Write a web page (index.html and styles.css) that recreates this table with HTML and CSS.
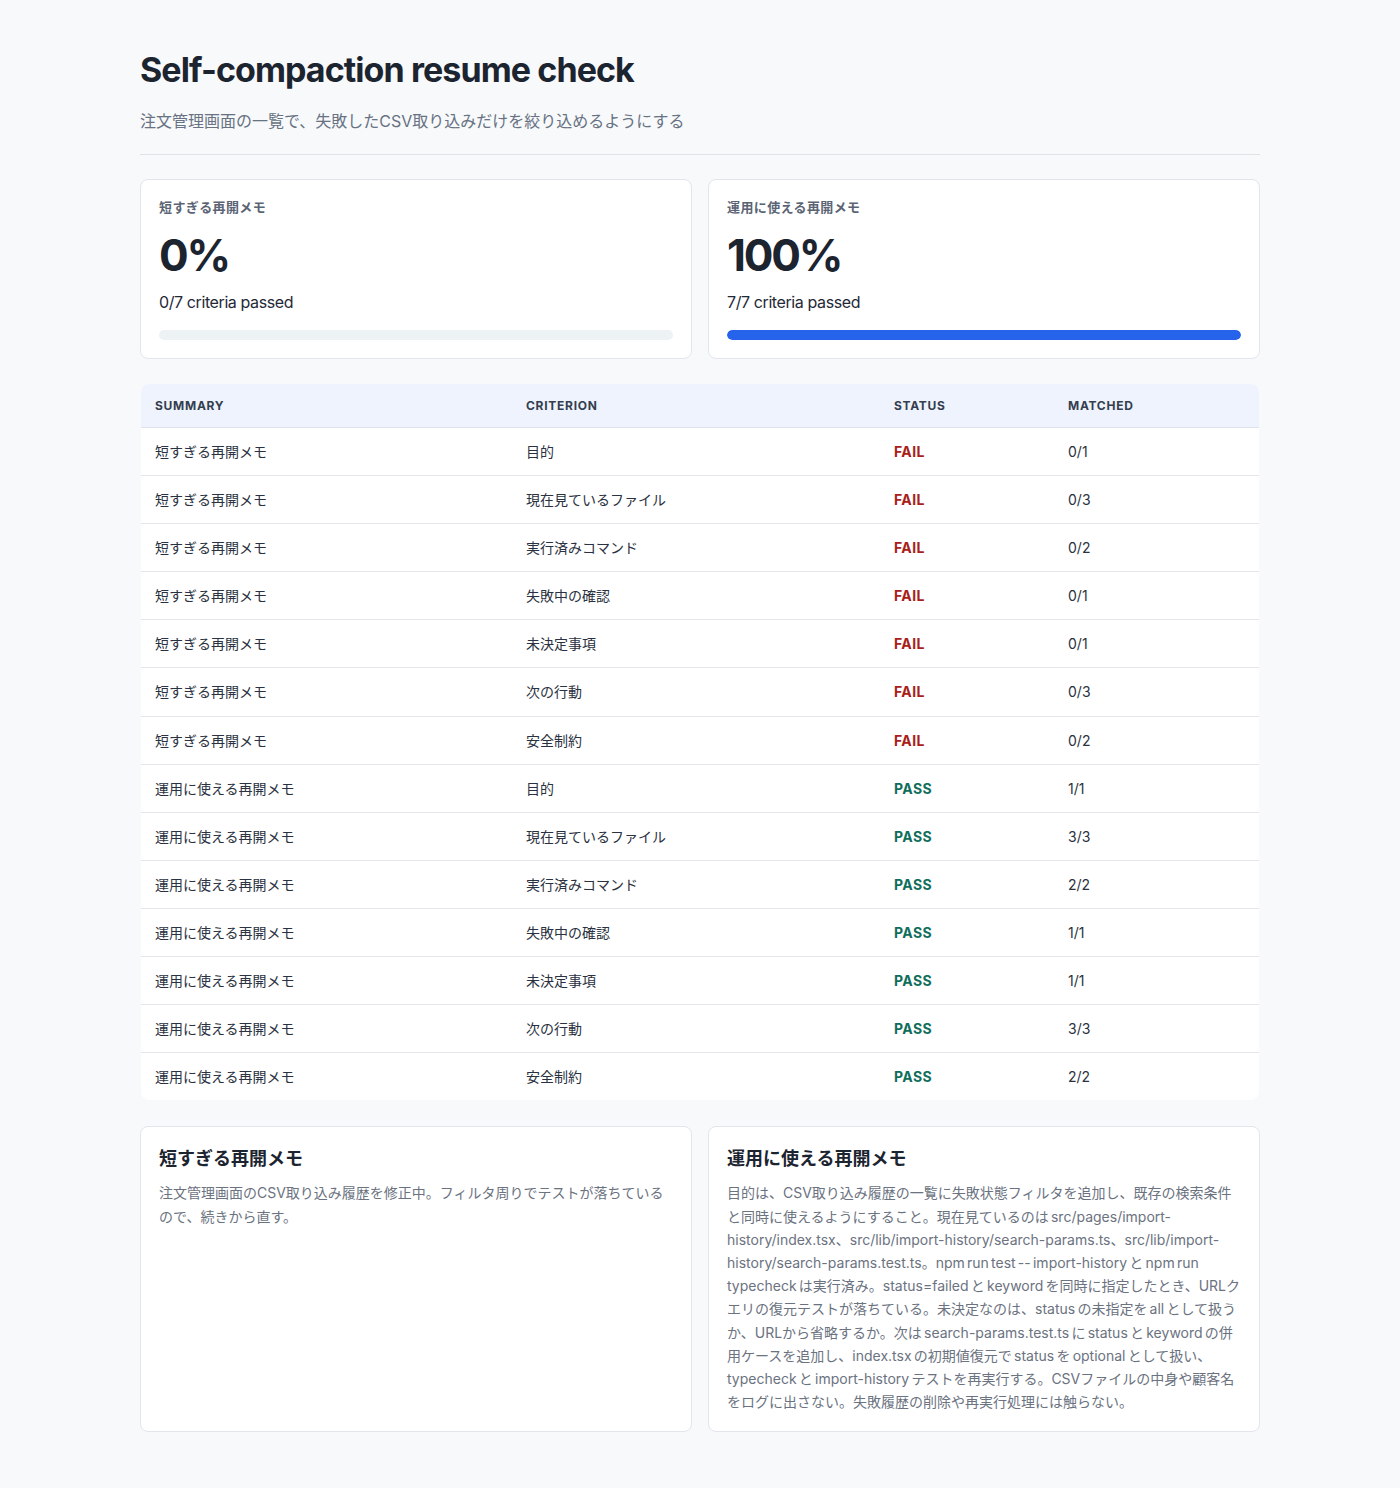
FILE: index.html
```html
<!DOCTYPE html>
<html lang="ja">
<head>
<meta charset="utf-8">
<title>Self-compaction resume check</title>
<link rel="stylesheet" href="styles.css">
</head>
<body>
<main class="page">
  <header class="head">
    <h1 class="title">Self-compaction resume check</h1>
    <p class="subtitle">注文管理画面の一覧で、失敗したCSV取り込みだけを絞り込めるようにする</p>
  </header>

  <section class="scores">
    <div class="card score">
      <div class="score-label">短すぎる再開メモ</div>
      <div class="score-value">0%</div>
      <div class="score-text">0/7 criteria passed</div>
      <div class="bar"><div class="bar-fill" style="width:0%"></div></div>
    </div>
    <div class="card score">
      <div class="score-label">運用に使える再開メモ</div>
      <div class="score-value">100%</div>
      <div class="score-text">7/7 criteria passed</div>
      <div class="bar"><div class="bar-fill" style="width:100%"></div></div>
    </div>
  </section>

  <div class="table-wrap">
  <table class="results">
    <colgroup>
      <col class="c1"><col class="c2"><col class="c3"><col class="c4">
    </colgroup>
    <thead>
      <tr><th>Summary</th><th>Criterion</th><th>Status</th><th>Matched</th></tr>
    </thead>
    <tbody>
      <tr><td>短すぎる再開メモ</td><td>目的</td><td class="fail">FAIL</td><td>0/1</td></tr>
      <tr><td>短すぎる再開メモ</td><td>現在見ているファイル</td><td class="fail">FAIL</td><td>0/3</td></tr>
      <tr><td>短すぎる再開メモ</td><td>実行済みコマンド</td><td class="fail">FAIL</td><td>0/2</td></tr>
      <tr><td>短すぎる再開メモ</td><td>失敗中の確認</td><td class="fail">FAIL</td><td>0/1</td></tr>
      <tr><td>短すぎる再開メモ</td><td>未決定事項</td><td class="fail">FAIL</td><td>0/1</td></tr>
      <tr><td>短すぎる再開メモ</td><td>次の行動</td><td class="fail">FAIL</td><td>0/3</td></tr>
      <tr><td>短すぎる再開メモ</td><td>安全制約</td><td class="fail">FAIL</td><td>0/2</td></tr>
      <tr><td>運用に使える再開メモ</td><td>目的</td><td class="pass">PASS</td><td>1/1</td></tr>
      <tr><td>運用に使える再開メモ</td><td>現在見ているファイル</td><td class="pass">PASS</td><td>3/3</td></tr>
      <tr><td>運用に使える再開メモ</td><td>実行済みコマンド</td><td class="pass">PASS</td><td>2/2</td></tr>
      <tr><td>運用に使える再開メモ</td><td>失敗中の確認</td><td class="pass">PASS</td><td>1/1</td></tr>
      <tr><td>運用に使える再開メモ</td><td>未決定事項</td><td class="pass">PASS</td><td>1/1</td></tr>
      <tr><td>運用に使える再開メモ</td><td>次の行動</td><td class="pass">PASS</td><td>3/3</td></tr>
      <tr><td>運用に使える再開メモ</td><td>安全制約</td><td class="pass">PASS</td><td>2/2</td></tr>
    </tbody>
  </table>
  </div>

  <section class="memos">
    <article class="card memo">
      <h2 class="memo-title">短すぎる再開メモ</h2>
      <p class="memo-body">注文管理画面のCSV取り込み履歴を修正中。フィルタ周りでテストが落ちているので、続きから直す。</p>
    </article>
    <article class="card memo">
      <h2 class="memo-title">運用に使える再開メモ</h2>
      <p class="memo-body">目的は、CSV取り込み履歴の一覧に失敗状態フィルタを追加し、既存の検索条件と同時に使えるようにすること。現在見ているのは src/pages/import-history/index.tsx、src/lib/import-history/search-params.ts、src/lib/import-history/search-params.test.ts。npm run test -- import-history と npm run typecheck は実行済み。status=failed と keyword を同時に指定したとき、URLクエリの復元テストが落ちている。未決定なのは、status の未指定を all として扱うか、URLから省略するか。次は search-params.test.ts に status と keyword の併用ケースを追加し、index.tsx の初期値復元で status を optional として扱い、typecheck と import-history テストを再実行する。CSVファイルの中身や顧客名をログに出さない。失敗履歴の削除や再実行処理には触らない。</p>
    </article>
  </section>
</main>
</body>
</html>
```

FILE: styles.css
```css
* { box-sizing: border-box; }

html, body {
  margin: 0;
  padding: 0;
  background: #f7f9fb;
}

body {
  font-family: "Inter", "Noto Sans CJK JP", sans-serif;
  color: #1f2937;
}

.page {
  width: 1120px;
  margin: 0 auto;
  padding: 48px 0 56px;
}

.head {
  border-bottom: 1px solid #dfe3e8;
  padding-bottom: 22px;
}

.title {
  margin: 0;
  font-size: 34px;
  line-height: 44px;
  font-weight: 700;
  letter-spacing: -0.027em;
  color: #1c2430;
}

.subtitle {
  margin: 18px 0 0;
  font-size: 16px;
  line-height: 22px;
  color: #687282;
}

.scores {
  margin-top: 24px;
  display: grid;
  grid-template-columns: 1fr 1fr;
  gap: 16px;
}

.card {
  background: #ffffff;
  border: 1px solid #e2e6ec;
  border-radius: 8px;
}

.score {
  padding: 18px 18px 18px;
}

.score-label {
  font-size: 13px;
  line-height: 18px;
  font-weight: 700;
  letter-spacing: 0.03em;
  color: #5b6474;
}

.score-value {
  margin-top: 17px;
  font-size: 44px;
  line-height: 44px;
  font-weight: 700;
  letter-spacing: -0.05em;
  color: #1c2430;
}

.score-text {
  margin-top: 13px;
  font-size: 16px;
  line-height: 24px;
  letter-spacing: -0.025em;
  color: #1f2937;
}

.bar {
  margin-top: 16px;
  height: 10px;
  border-radius: 5px;
  background: #edf2f5;
  overflow: hidden;
}

.bar-fill {
  height: 100%;
  border-radius: 5px;
  background: #2563eb;
}

.table-wrap {
  margin-top: 25px;
  padding: 0 1px;
}

.results {
  width: 100%;
  border-collapse: collapse;
  table-layout: fixed;
  background: #ffffff;
  border-radius: 8px;
  overflow: hidden;
}

.c1 { width: 371px; }
.c2 { width: 368px; }
.c3 { width: 174px; }
.c4 { width: 205px; }

.results th {
  text-align: left;
  background: #eef3fd;
  font-size: 12px;
  line-height: 15px;
  font-weight: 700;
  letter-spacing: 0.06em;
  text-transform: uppercase;
  color: #343e4e;
  padding: 14px 14px 14px;
  border-bottom: 1px solid #dde3ea;
}

.results td {
  font-size: 14px;
  line-height: 20px;
  color: #2a3140;
  padding: 14px 14px 13.1px;
  border-bottom: 1px solid #e3e7ec;
}

.results tbody tr:last-child td {
  border-bottom: none;
}

.results td.fail {
  color: #a8201a;
  font-weight: 700;
  letter-spacing: 0.03em;
}

.results td.pass {
  color: #0f6e5c;
  font-weight: 700;
  letter-spacing: 0.03em;
}

.memos {
  margin-top: 26px;
  display: grid;
  grid-template-columns: 1fr 1fr;
  gap: 16px;
  align-items: stretch;
}

.memo {
  padding: 18px 18px 18px;
}

.memo-title {
  margin: 0;
  font-size: 18px;
  line-height: 28px;
  font-weight: 700;
  color: #1c2430;
}

.memo-body {
  margin: 8px 0 0;
  font-size: 14px;
  line-height: 23.2px;
  word-spacing: -1.7px;
  color: #6b7280;
}
```
